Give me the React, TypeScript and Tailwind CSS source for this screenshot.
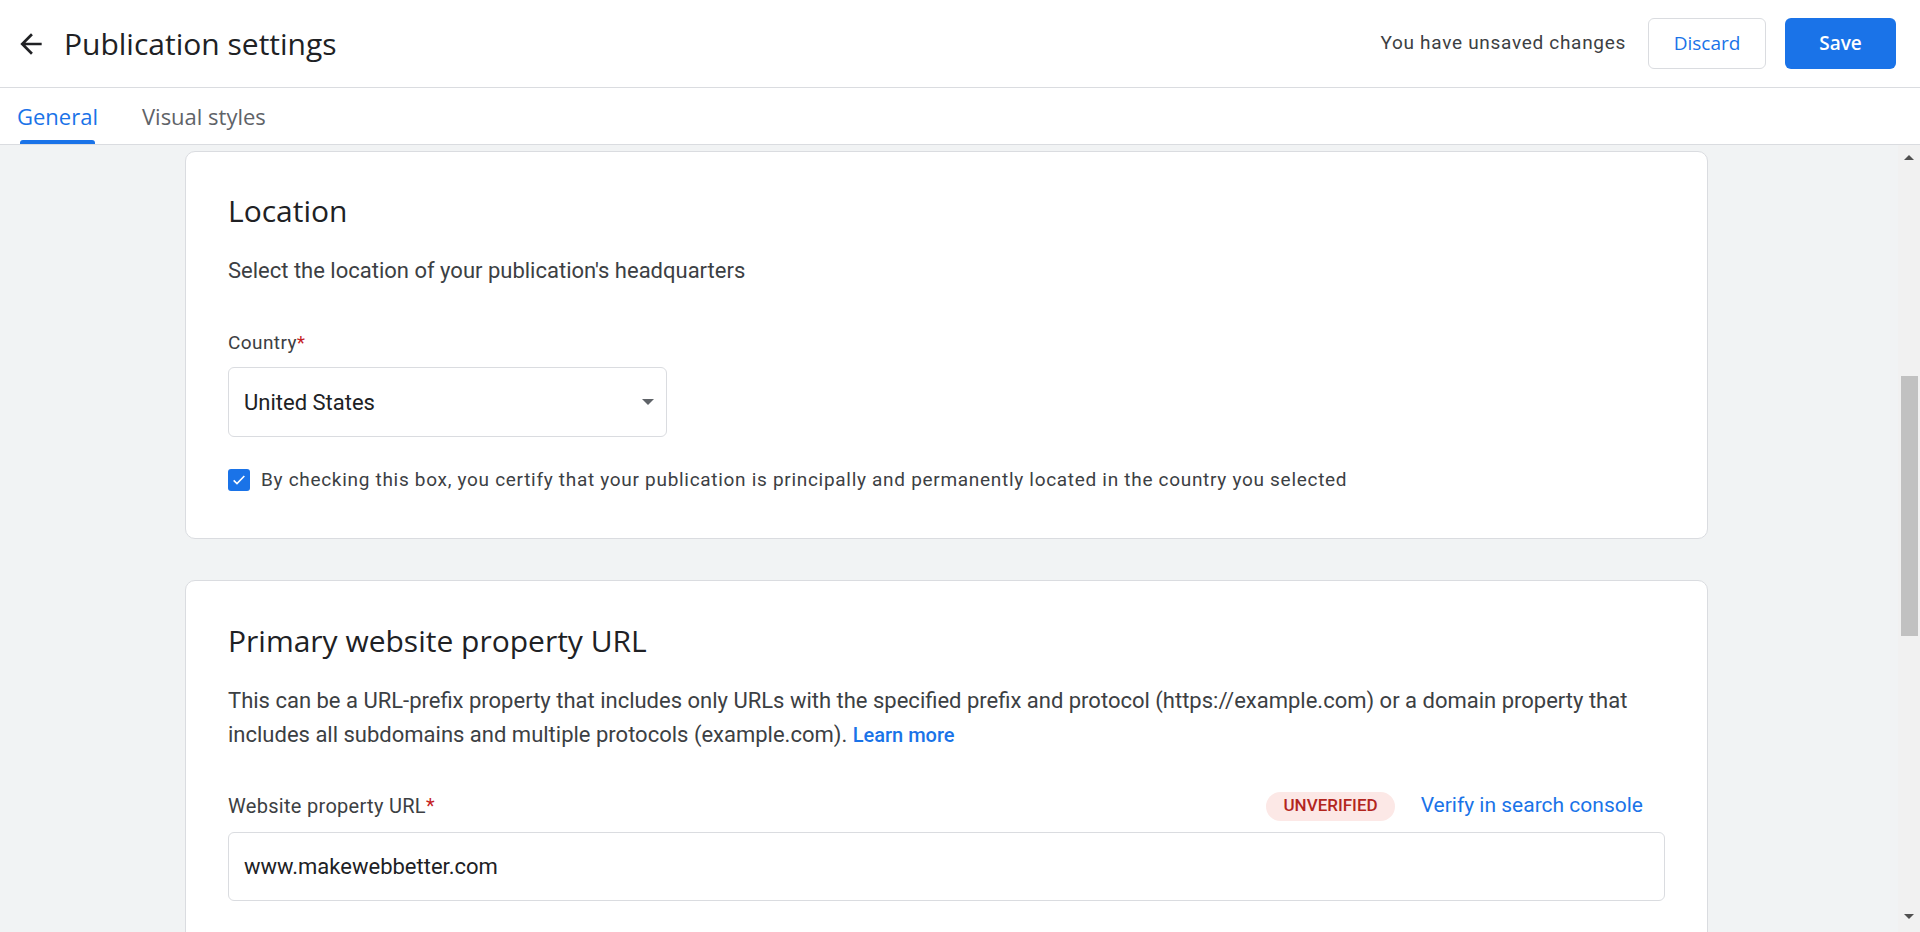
import React from "react";

const heading = "font-['Open_Sans',sans-serif]";

const ArrowBack = () => (
  <svg width="32" height="32" viewBox="0 0 24 24" fill="#202124">
    <path d="M20 11H7.83l5.59-5.59L12 4l-8 8 8 8 1.41-1.41L7.83 13H20v-2z" />
  </svg>
);

const Card = ({ children, top }: { children: React.ReactNode; top: string }) => (
  <section className={`w-[1523px] ml-[185px] bg-white border border-[#dadce0] rounded-[10px] px-[42px] ${top}`}>
    {children}
  </section>
);

const Scrollbar = () => (
  <div className="w-[22px] flex flex-col bg-[#f1f1f1]">
    <div className="h-[24px] flex items-center justify-center">
      <div className="w-0 h-0 border-l-[5px] border-r-[5px] border-b-[5px] border-l-transparent border-r-transparent border-b-[#505050]" />
    </div>
    <div className="flex-1 pt-[207px] flex justify-center">
      <div className="w-[17px] h-[260px] bg-[#c1c1c1]" />
    </div>
    <div className="h-[24px] mb-[4px] flex items-center justify-center">
      <div className="w-0 h-0 border-l-[5px] border-r-[5px] border-t-[5px] border-l-transparent border-r-transparent border-t-[#505050]" />
    </div>
  </div>
);

export default function App() {
  return (
    <div className="h-[932px] flex flex-col bg-[#f1f3f4] overflow-hidden font-['Roboto',sans-serif] text-[#3c4043]">
      <header className="h-[88px] shrink-0 bg-white border-b border-[#dadce0] flex items-center pl-[15px] pr-[24px]">
        <ArrowBack />
        <h1 className={`${heading} ml-[17px] text-[30px] text-[#202124]`}>
          Publication settings
        </h1>
        <div className="flex-1" />
        <span className="text-[19px] tracking-[0.7px] text-[#3c4043]">
          You have unsaved changes
        </span>
        <button className={`${heading} ml-[22px] w-[118px] h-[51px] rounded-[6px] border border-[#dadce0] text-[#1a73e8] text-[19px] font-medium`}>
          Discard
        </button>
        <button className={`${heading} ml-[19px] w-[111px] h-[51px] rounded-[6px] bg-[#1a73e8] text-white text-[19px] font-semibold`}>
          Save
        </button>
      </header>

      <nav className="h-[57px] shrink-0 bg-white border-b border-[#dadce0] flex items-end pl-[17px] gap-[44px]">
        <div className="flex flex-col">
          <span className={`${heading} text-[22px] text-[#1a73e8] leading-[28px]`}>General</span>
          <div className="mt-[10px] mx-[3px] h-[4px] rounded-t-[3px] bg-[#1a73e8]" />
        </div>
        <div className="flex flex-col">
          <span className={`${heading} text-[22px] text-[#5f6368] leading-[28px]`}>Visual styles</span>
          <div className="mt-[10px] h-[4px]" />
        </div>
      </nav>

      <div className="flex-1 flex min-h-0">
        <main className="flex-1 overflow-hidden pt-[6px] flex flex-col gap-[41px]">
          <Card top="pt-[41px]">
            <h2 className={`${heading} text-[30px] leading-[36px] text-[#202124]`}>Location</h2>
            <p className="mt-[28px] text-[22px] leading-[28px]">
              Select the location of your publication's headquarters
            </p>
            <label className="block mt-[46px] text-[19px] leading-[24px] tracking-[0.4px] text-[#3c4043]">
              Country<span className="text-[#c5221f]">*</span>
            </label>
            <div className="mt-[12px] w-[439px] h-[70px] rounded-[6px] border border-[#dadce0] flex items-center pl-[15px] pr-[12px]">
              <span className="flex-1 text-[22px] text-[#202124]">United States</span>
              <div className="w-0 h-0 border-l-[6px] border-r-[6px] border-t-[6px] border-l-transparent border-r-transparent border-t-[#5f6368]" />
            </div>
            <div className="mt-[29px] pb-[43px] flex items-center gap-[11px]">
              <div className="w-[22px] h-[22px] rounded-[3px] bg-[#1a73e8] flex items-center justify-center">
                <svg width="16" height="16" viewBox="0 0 24 24" fill="none" stroke="white" strokeWidth="2.4">
                  <path d="M4 12.5l5 5L20 6" />
                </svg>
              </div>
              <span className="text-[19px] tracking-[0.7px] text-[#3c4043]">
                By checking this box, you certify that your publication is principally and permanently located in the country you selected
              </span>
            </div>
          </Card>

          <Card top="pt-[42px]">
            <h2 className={`${heading} text-[30px] leading-[36px] text-[#202124]`}>
              Primary website property URL
            </h2>
            <p className="mt-[25px] text-[22px] leading-[34px]">
              This can be a URL-prefix property that includes only URLs with the specified prefix and protocol (https://example.com) or a domain property that
              <br />
              includes all subdomains and multiple protocols (example.com).{" "}
              <a className="text-[#1a73e8] text-[20px] font-medium">Learn more</a>
            </p>
            <div className="mt-[40px] h-[29px] flex items-center pr-[22px]">
              <label className="flex-1 text-[20px] tracking-[0.3px] text-[#3c4043]">
                Website property URL<span className="text-[#c5221f]">*</span>
              </label>
              <span className="h-[29px] px-[17px] rounded-full bg-[#fce8e6] text-[#b3261e] text-[17px] font-medium flex items-center">
                UNVERIFIED
              </span>
              <a className="ml-[26px] text-[#1a73e8] text-[21px]">Verify in search console</a>
            </div>
            <div className="mt-[11px] h-[69px] rounded-[6px] border border-[#dadce0] flex items-center pl-[15px]">
              <span className="text-[22px] text-[#202124]">www.makewebbetter.com</span>
            </div>
            <div className="h-[60px]" />
          </Card>
        </main>
        <Scrollbar />
      </div>
    </div>
  );
}
